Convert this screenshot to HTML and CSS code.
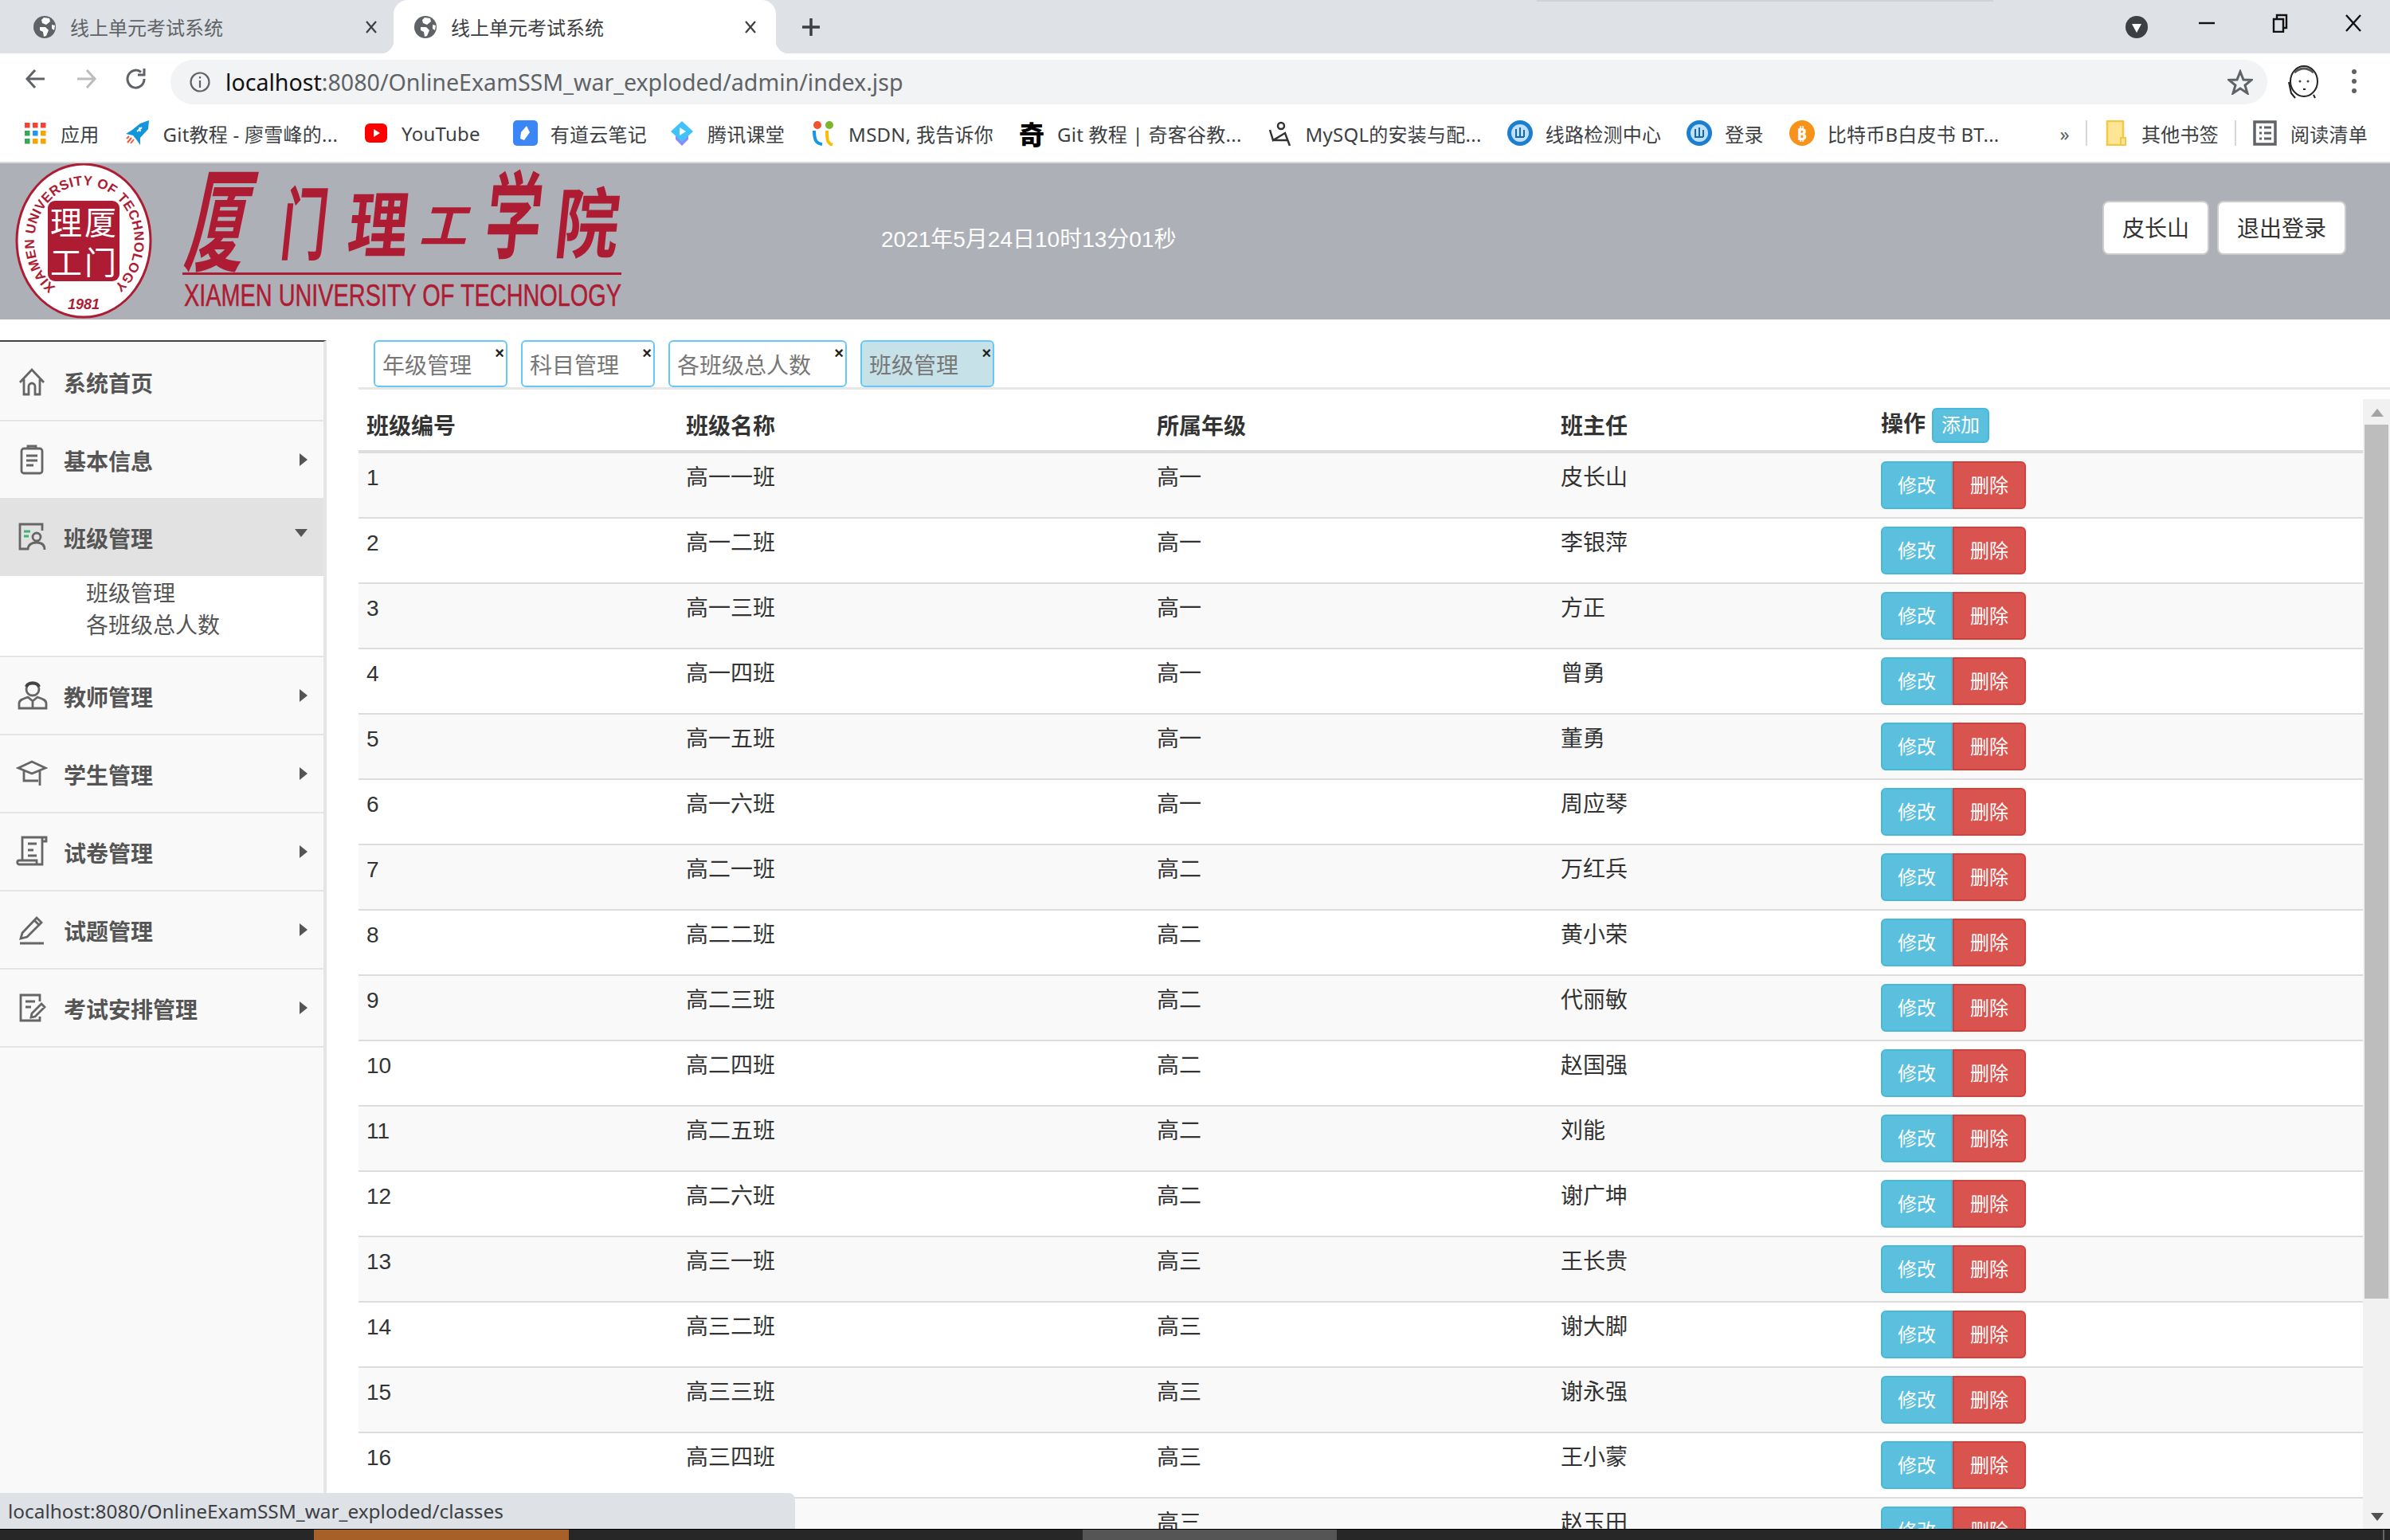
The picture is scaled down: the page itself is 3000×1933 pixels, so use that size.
FILE: index.html
```html
<!DOCTYPE html>
<html lang="zh-CN">
<head>
  <meta charset="UTF-8" />
  <title>线上单元考试系统</title>
  <link rel="stylesheet" href="styles.css">
</head>
<body>
  <svg class="defs" width="0" height="0">
    <symbol id="globe" viewBox="0 0 28 28">
      <circle cx="14" cy="14" r="14" fill="#5f6368"/>
      <path d="M13 2 L20 3 L21 7 L16 11 L11 9 L10 5 Z M8 14 L15 14 L19 18 L16 25 L13 26 L12 20 L8 18 Z M23 11 L27 12 L26 18 L23 16 Z" fill="#fff"/>
    </symbol>
  </svg>

  <div class="tabstrip">
    <div class="tab">
      <svg class="favicon"><use href="#globe"/></svg>
      <span class="tab-title">线上单元考试系统</span>
      <svg class="tab-close" viewBox="0 0 16 16"><path d="M2 1 L14 15 M14 1 L2 15"/></svg>
    </div>
    <div class="tab tab-on">
      <svg class="favicon"><use href="#globe"/></svg>
      <span class="tab-title">线上单元考试系统</span>
      <svg class="tab-close" viewBox="0 0 16 16"><path d="M2 1 L14 15 M14 1 L2 15"/></svg>
    </div>
    <svg class="tab-new" viewBox="0 0 24 24"><path d="M12 1 V23 M1 12 H23"/></svg>
    <div class="win-ctrls">
      <svg class="win-drop" viewBox="0 0 28 28"><circle cx="14" cy="14" r="14" fill="#3c4043"/><path d="M8 10 H20 L14 21 Z" fill="#fff"/></svg>
      <svg class="win-btn" viewBox="0 0 24 24"><path d="M2 12 H22"/></svg>
      <svg class="win-btn" viewBox="0 0 24 24"><path d="M4 7 H16 V23 H4 Z M8 7 V2 H20 V18 H16"/></svg>
      <svg class="win-btn" viewBox="0 0 24 24"><path d="M3 2 L21 22 M21 2 L3 22"/></svg>
    </div>
  </div>

  <div class="toolbar">
    <svg class="tool-icon" viewBox="0 0 28 28"><path d="M25 14 H4 M13 3 L3 14 L13 25"/></svg>
    <svg class="tool-icon tool-off" viewBox="0 0 28 28"><path d="M3 14 H24 M15 3 L25 14 L15 25"/></svg>
    <svg class="tool-icon" viewBox="0 0 28 28"><path d="M24 14 A10.5 11 0 1 1 20 5.5 M24 1 V9 H16"/></svg>
    <div class="omnibox">
      <svg class="info-icon" viewBox="0 0 26 26"><circle cx="13" cy="13" r="11.5"/><path d="M13 11 V20 M13 6 V8.5"/></svg>
      <span class="url"><b>localhost</b>:8080/OnlineExamSSM_war_exploded/admin/index.jsp</span>
      <svg class="star" viewBox="0 0 32 32"><path d="M16 3 L20 13 L30 13.5 L22 20 L25 30 L16 24 L7 30 L10 20 L2 13.5 L12 13 Z"/></svg>
    </div>
    <svg class="avatar" viewBox="0 0 44 44"><ellipse cx="24" cy="21" rx="17" ry="19" fill="#fff" stroke="#222" stroke-width="2"/><path d="M12 10 Q24 0 36 10" fill="none" stroke="#555" stroke-width="3"/><circle cx="19" cy="21" r="1.5" fill="#444"/><circle cx="29" cy="21" r="1.5" fill="#444"/><path d="M23 31 H26 M5 22 L8 36 L13 42 M36 38 L38 42" fill="none" stroke="#222" stroke-width="2"/></svg>
    <div class="menu-dots"><i></i><i></i><i></i></div>
  </div>

  <div class="bookmarks">
    <div class="bm">
      <svg class="bm-icon" viewBox="0 0 32 32">
        <rect x="3" y="3" width="6.5" height="6.5" fill="#f44336"/><rect x="13" y="3" width="6.5" height="6.5" fill="#f44336"/><rect x="23" y="3" width="6.5" height="6.5" fill="#f44336"/>
        <rect x="3" y="13" width="6.5" height="6.5" fill="#34a853"/><rect x="13" y="13" width="6.5" height="6.5" fill="#2196f3"/><rect x="23" y="13" width="6.5" height="6.5" fill="#f5a500"/>
        <rect x="3" y="23" width="6.5" height="6.5" fill="#34a853"/><rect x="13" y="23" width="6.5" height="6.5" fill="#f5a500"/><rect x="23" y="23" width="6.5" height="6.5" fill="#f5a500"/>
      </svg>
      <span>应用</span>
    </div>
    <div class="bm">
      <svg class="bm-icon" viewBox="0 0 32 32"><path d="M30 0 L29 11 L19 22 L19 31 L14 24 L10 19 L1 17 L9 12 L19 4 Z" fill="#1296db"/><path d="M15 14 L21 9 M18 9 L19 14" stroke="#fff" stroke-width="2"/><path d="M3 28 L8 22 M7 29 L11 24 M2 23 L5 20" stroke="#f0553a" stroke-width="2"/></svg>
      <span>Git教程 - 廖雪峰的...</span>
    </div>
    <div class="bm bm-wide">
      <svg class="bm-icon" viewBox="0 0 32 32"><rect x="2" y="4" width="28" height="24" rx="6" fill="#f00"/><path d="M13 11 L21 16 L13 21 Z" fill="#fff"/></svg>
      <span>YouTube</span>
    </div>
    <div class="bm bm-narrow">
      <svg class="bm-icon" viewBox="0 0 32 32"><rect x="1" y="0" width="31" height="32" rx="5" fill="#3a86f7"/><path d="M18 7 L22 15 L15 25 L10 23 L11 15 Z" fill="#fff"/></svg>
      <span>有道云笔记</span>
    </div>
    <div class="bm">
      <svg class="bm-icon" viewBox="0 0 32 32"><path d="M8 18 L16 26 L24 18 L24 24 L16 32 L8 24 Z" fill="#8b8cf5"/><path d="M16 1 L30 14 L16 27 L2 14 Z" fill="#3fc3fa"/><path d="M13 9 L21 14 L13 19 Z" fill="#fff"/></svg>
      <span>腾讯课堂</span>
    </div>
    <div class="bm">
      <svg class="bm-icon" viewBox="0 0 32 32"><circle cx="9" cy="6" r="5" fill="#f0532d"/><circle cx="24" cy="6" r="5" fill="#7cb62a"/><path d="M5 13 C5 26 8 29 15 30" fill="none" stroke="#1597e5" stroke-width="4"/><path d="M21 13 C21 26 22 29 28 31" fill="none" stroke="#fbbc05" stroke-width="4"/></svg>
      <span>MSDN, 我告诉你</span>
    </div>
    <div class="bm">
      <span class="bm-icon bm-qi">奇</span>
      <span>Git 教程 | 奇客谷教...</span>
    </div>
    <div class="bm">
      <svg class="bm-icon" viewBox="0 0 32 32"><circle cx="17" cy="7" r="4" fill="none" stroke="#333" stroke-width="2.5"/><path d="M3 12 L7 25 L22 16 L28 32 M7 25 L25 25" fill="none" stroke="#333" stroke-width="2.5"/></svg>
      <span>MySQL的安装与配...</span>
    </div>
    <div class="bm">
      <svg class="bm-icon" viewBox="0 0 32 32"><circle cx="16" cy="16" r="16" fill="#1a7fd1"/><circle cx="16" cy="16" r="11" fill="#bfe0f7"/><path d="M11 11 V21 H21 M16 9 V21 M21 12 V21" fill="none" stroke="#1466ad" stroke-width="2"/></svg>
      <span>线路检测中心</span>
    </div>
    <div class="bm">
      <svg class="bm-icon" viewBox="0 0 32 32"><circle cx="16" cy="16" r="16" fill="#1a7fd1"/><circle cx="16" cy="16" r="11" fill="#bfe0f7"/><path d="M11 11 V21 H21 M16 9 V21 M21 12 V21" fill="none" stroke="#1466ad" stroke-width="2"/></svg>
      <span>登录</span>
    </div>
    <div class="bm">
      <span class="bm-icon bm-btc">₿</span>
      <span>比特币B白皮书 BT...</span>
    </div>
    <span class="bm-more">»</span>
    <i class="bm-sep"></i>
    <div class="bm bm-tight">
      <svg class="bm-icon" viewBox="0 0 32 32"><path d="M5 1 H25 V31 H5 Z" fill="#ffe596" stroke="#f4c842" stroke-width="2.5"/><path d="M22 22 H28 V31 H22 Z" fill="#ffe596" stroke="#f4c842" stroke-width="2"/></svg>
      <span>其他书签</span>
    </div>
    <i class="bm-sep"></i>
    <div class="bm bm-tight">
      <svg class="bm-icon" viewBox="0 0 32 32"><rect x="3" y="2" width="26" height="28" fill="none" stroke="#5f6368" stroke-width="3.5"/><path d="M9 9 H12 M15 9 H24 M9 16 H12 M15 16 H24 M9 23 H12 M15 23 H24" stroke="#5f6368" stroke-width="3"/></svg>
      <span>阅读清单</span>
    </div>
  </div>

  <header class="site-header">
    <svg class="logo" viewBox="0 205 800 196" width="800" height="196">
      <g transform="translate(10 200)" fill="#ae1c34">
        <ellipse cx="95" cy="102" rx="84" ry="96" fill="#fff" stroke="#ae1c34" stroke-width="3"/>
        <path id="ring" d="M60 160 A63 70 0 1 1 132 160" fill="none"/>
        <text class="seal-ring"><textPath href="#ring" textLength="338">XIAMEN UNIVERSITY OF TECHNOLOGY</textPath></text>
        <text class="seal-year" x="95" y="188" text-anchor="middle">1981</text>
        <rect x="50" y="52" width="90" height="101" rx="9"/>
        <g class="seal-chars" fill="#fff">
          <text x="96" y="94">厦</text>
          <text x="96" y="144">门</text>
          <text x="53" y="94">理</text>
          <text x="53" y="144">工</text>
        </g>
      </g>
      <g class="logo-cn" fill="#ae1c34">
        <text transform="translate(230 329) skewX(-12) scale(.62 1.16)" font-size="120">厦</text>
        <text transform="translate(350 318) skewX(-6) scale(.72 1.25)" font-size="80">门</text>
        <text transform="translate(434 316) skewX(-6) scale(1 1.2)" font-size="76">理</text>
        <text transform="translate(526 305) skewX(-14)" font-size="60">工</text>
        <text transform="translate(606 315) skewX(-6) scale(.9 1.53)" font-size="78">学</text>
        <text transform="translate(694 316) skewX(-6) scale(1 1.2)" font-size="80">院</text>
      </g>
      <rect x="229" y="342" width="551" height="3" fill="#ae1c34"/>
      <text class="logo-en" x="231" y="384" textLength="549" lengthAdjust="spacingAndGlyphs" fill="#ae1c34">XIAMEN UNIVERSITY OF TECHNOLOGY</text>
    </svg>
    <div class="clock">2021年5月24日10时13分01秒</div>
    <div class="user-btns">
      <button class="user-btn">皮长山</button>
      <button class="user-btn">退出登录</button>
    </div>
  </header>

  <div class="main">
    <aside class="sidebar">
      <div class="nav-item">
        <svg class="nav-icon" viewBox="0 0 40 40"><path d="M5 21 L20 5 L35 21 M10 17 V36 H16 V26 A4 4 0 0 1 24 26 V36 H30 V17"/></svg>
        <span>系统首页</span>
      </div>
      <div class="nav-item nav-before-on">
        <svg class="nav-icon" viewBox="0 0 40 40"><rect x="7" y="6" width="26" height="31" rx="3"/><path d="M15 6 V3 H25 V6 M13 15 H27 M13 21 H27 M13 27 H22"/></svg>
        <span>基本信息</span>
        <i class="caret"></i>
      </div>
      <div class="nav-item nav-on">
        <svg class="nav-icon" viewBox="0 0 40 40"><path d="M16 35 H5 V4 H33 V12"/><path class="nav-green" d="M10 13 H18 M10 19 H16"/><circle cx="26" cy="20" r="5"/><path d="M15 36 C15 29 20 27 26 27 C32 27 36 29 36 36"/></svg>
        <span>班级管理</span>
        <i class="caret caret-down"></i>
      </div>
      <div class="nav-sub">
        <div>班级管理</div>
        <div>各班级总人数</div>
      </div>
      <div class="nav-item">
        <svg class="nav-icon" viewBox="0 0 40 40"><circle cx="21" cy="12" r="8"/><path class="nav-thick" d="M13 9 C15 3 27 3 29 9"/><path d="M4 36 V30 C4 25 10 24 15 22 L21 27 L27 22 C32 24 38 25 38 30 V36 Z M21 27 V35"/></svg>
        <span>教师管理</span>
        <i class="caret"></i>
      </div>
      <div class="nav-item">
        <svg class="nav-icon" viewBox="0 0 40 40"><path d="M3 13 L20 5 L37 13 L20 20 Z M10 17 V29 H28 M30 17 V35"/></svg>
        <span>学生管理</span>
        <i class="caret"></i>
      </div>
      <div class="nav-item">
        <svg class="nav-icon" viewBox="0 0 40 40"><path d="M33 2 H8 V31 M33 2 V36 H4 C1 36 1 31 4 31 H26 V36 M33 2 H38 V7 H33 M15 10 H26 M15 18 H22 M15 25 H26"/></svg>
        <span>试卷管理</span>
        <i class="caret"></i>
      </div>
      <div class="nav-item">
        <svg class="nav-icon" viewBox="0 0 40 40"><path d="M8 24 L26 5 L32 11 L14 29 L6 31 Z M23 8 L29 14 M5 37 H35"/></svg>
        <span>试题管理</span>
        <i class="caret"></i>
      </div>
      <div class="nav-item">
        <svg class="nav-icon" viewBox="0 0 40 40"><path d="M30 12 V4 H6 V36 H30 V31 M12 12 H24 M12 19 H19 M20 27 L32 15 L36 19 L24 31 L19 32 Z"/></svg>
        <span>考试安排管理</span>
        <i class="caret"></i>
      </div>
    </aside>

    <section class="content">
      <div class="page-tabs">
        <div class="page-tab">年级管理<span class="page-tab-x">×</span></div>
        <div class="page-tab">科目管理<span class="page-tab-x">×</span></div>
        <div class="page-tab">各班级总人数<span class="page-tab-x">×</span></div>
        <div class="page-tab page-tab-on">班级管理<span class="page-tab-x">×</span></div>
      </div>
      <div class="table-wrap">
        <div class="table-scroll">
          <table class="data">
            <colgroup><col class="c1"><col class="c2"><col class="c3"><col class="c4"><col class="c5"></colgroup>
            <thead>
              <tr><th>班级编号</th><th>班级名称</th><th>所属年级</th><th>班主任</th><th><div class="th-op"><span>操作</span><button class="btn-add">添加</button></div></th></tr>
            </thead>
            <tbody>
              <tr><td>1</td><td>高一一班</td><td>高一</td><td>皮长山</td><td><button class="btn-edit">修改</button><button class="btn-del">删除</button></td></tr>
              <tr><td>2</td><td>高一二班</td><td>高一</td><td>李银萍</td><td><button class="btn-edit">修改</button><button class="btn-del">删除</button></td></tr>
              <tr><td>3</td><td>高一三班</td><td>高一</td><td>方正</td><td><button class="btn-edit">修改</button><button class="btn-del">删除</button></td></tr>
              <tr><td>4</td><td>高一四班</td><td>高一</td><td>曾勇</td><td><button class="btn-edit">修改</button><button class="btn-del">删除</button></td></tr>
              <tr><td>5</td><td>高一五班</td><td>高一</td><td>董勇</td><td><button class="btn-edit">修改</button><button class="btn-del">删除</button></td></tr>
              <tr><td>6</td><td>高一六班</td><td>高一</td><td>周应琴</td><td><button class="btn-edit">修改</button><button class="btn-del">删除</button></td></tr>
              <tr><td>7</td><td>高二一班</td><td>高二</td><td>万红兵</td><td><button class="btn-edit">修改</button><button class="btn-del">删除</button></td></tr>
              <tr><td>8</td><td>高二二班</td><td>高二</td><td>黄小荣</td><td><button class="btn-edit">修改</button><button class="btn-del">删除</button></td></tr>
              <tr><td>9</td><td>高二三班</td><td>高二</td><td>代丽敏</td><td><button class="btn-edit">修改</button><button class="btn-del">删除</button></td></tr>
              <tr><td>10</td><td>高二四班</td><td>高二</td><td>赵国强</td><td><button class="btn-edit">修改</button><button class="btn-del">删除</button></td></tr>
              <tr><td>11</td><td>高二五班</td><td>高二</td><td>刘能</td><td><button class="btn-edit">修改</button><button class="btn-del">删除</button></td></tr>
              <tr><td>12</td><td>高二六班</td><td>高二</td><td>谢广坤</td><td><button class="btn-edit">修改</button><button class="btn-del">删除</button></td></tr>
              <tr><td>13</td><td>高三一班</td><td>高三</td><td>王长贵</td><td><button class="btn-edit">修改</button><button class="btn-del">删除</button></td></tr>
              <tr><td>14</td><td>高三二班</td><td>高三</td><td>谢大脚</td><td><button class="btn-edit">修改</button><button class="btn-del">删除</button></td></tr>
              <tr><td>15</td><td>高三三班</td><td>高三</td><td>谢永强</td><td><button class="btn-edit">修改</button><button class="btn-del">删除</button></td></tr>
              <tr><td>16</td><td>高三四班</td><td>高三</td><td>王小蒙</td><td><button class="btn-edit">修改</button><button class="btn-del">删除</button></td></tr>
              <tr><td>17</td><td>高三五班</td><td>高三</td><td>赵玉田</td><td><button class="btn-edit">修改</button><button class="btn-del">删除</button></td></tr>
            </tbody>
          </table>
        </div>
        <div class="scrollbar">
          <i class="sb-up"></i>
          <div class="sb-track"><div class="sb-thumb"></div></div>
          <i class="sb-down"></i>
        </div>
      </div>
    </section>
  </div>

  <div class="status-bubble">localhost:8080/OnlineExamSSM_war_exploded/classes</div>

  <div class="taskbar">
    <i class="tb-gap1"></i>
    <i class="tb-orange"></i>
    <i class="tb-gap2"></i>
    <i class="tb-grey"></i>
    <i class="tb-rest"></i>
  </div>
</body>
</html>
```

FILE: styles.css
```css
* { box-sizing: border-box; }
html, body { margin: 0; height: 100%; }
body { width: 3000px; height: 1933px; overflow: hidden; display: flex; flex-direction: column; position: relative; background: #fff; color: #333; font-family: "Liberation Sans", "Noto Sans CJK SC", sans-serif; font-size: 28px; }
.defs { position: absolute; }

/* browser chrome */
.tabstrip { height: 67px; flex: none; background: #dee1e6; display: flex; align-items: center; position: relative; }
.tabstrip::after { content: ""; position: absolute; top: 0; left: 1929px; width: 573px; height: 2px; background: #cfd2d6; }
.tab { width: 494px; height: 67px; display: flex; align-items: center; padding-left: 42px; color: #5f6368; font-family: "Noto Sans", "Noto Sans CJK SC", sans-serif; font-size: 24px; position: relative; }
.tab-on { width: 480px; padding-left: 26px; background: #fff; border-radius: 18px 18px 0 0; color: #3c4043; }
.tab-on::before, .tab-on::after { content: ""; position: absolute; bottom: 0; width: 16px; height: 16px; }
.tab-on::before { left: -16px; background: radial-gradient(circle at 0 0, transparent 16px, #fff 16.5px); }
.tab-on::after { right: -16px; background: radial-gradient(circle at 100% 0, transparent 16px, #fff 16.5px); }
.favicon { width: 28px; height: 28px; flex: none; margin-right: 18px; }
.tab-title { width: 192px; white-space: nowrap; }
.tab-close { width: 16px; height: 16px; margin-left: 178px; fill: none; stroke: #3c4043; stroke-width: 2.2; }
.tab-on .tab-close { margin-left: 176px; }
.tab-new { width: 24px; height: 24px; margin-left: 32px; fill: none; stroke: #3c4043; stroke-width: 3.5; }
.win-ctrls { margin-left: auto; display: flex; align-items: center; }
.win-drop { width: 28px; height: 28px; margin-right: 62px; }
.win-btn { width: 24px; height: 24px; margin-right: 68px; margin-top: -10px; fill: none; stroke: #111; stroke-width: 2.4; }
.win-btn:last-child { margin-right: 34px; }

.toolbar { height: 64px; flex: none; background: #fff; display: flex; align-items: center; padding-left: 31px; }
.tool-icon { width: 28px; height: 28px; margin-right: 35px; fill: none; stroke: #5f6368; stroke-width: 3; }
.tool-icon:nth-child(3) { margin-right: 29px; }
.tool-off { stroke: #babcbe; }
.omnibox { width: 2632px; height: 56px; margin-top: 8px; border-radius: 28px; background: #f1f3f4; display: flex; align-items: center; padding: 0 18px 0 24px; flex: none; }
.info-icon { width: 26px; height: 26px; flex: none; fill: none; stroke: #5f6368; stroke-width: 2.2; }
.url { margin-left: 19px; margin-bottom: 2px; font-family: "Noto Sans", sans-serif; font-size: 28.6px; color: #5f6368; white-space: nowrap; }
.url b { font-weight: 400; color: #111; }
.star { width: 32px; height: 32px; margin-left: auto; fill: none; stroke: #5f6368; stroke-width: 3; }
.avatar { width: 44px; height: 44px; margin-left: 22px; margin-top: 8px; flex: none; }
.menu-dots { margin-left: 40px; margin-top: 6px; display: flex; flex-direction: column; gap: 6px; }
.menu-dots i { width: 6px; height: 6px; border-radius: 50%; background: #5f6368; display: block; }

.bookmarks { height: 74px; flex: none; background: #fff; border-bottom: 2px solid #d9d9d9; display: flex; align-items: center; padding: 0 28px; font-family: "Noto Sans", "Noto Sans CJK SC", sans-serif; font-size: 24px; letter-spacing: .25px; color: #3c4043; white-space: nowrap; }
.bm { display: flex; align-items: center; gap: 16px; margin-right: 32px; }
.bm-wide { margin-right: 40px; }
.bm-narrow { margin-right: 28px; }
.bm-tight { margin-right: 0; }
.bm-icon { width: 32px; height: 32px; flex: none; display: block; }
.bm-qi { font-family: "Noto Sans CJK SC", sans-serif; font-size: 32px; font-weight: 900; color: #000; line-height: 32px; text-align: center; }
.bm-btc { border-radius: 50%; background: #f7931a; color: #fff; font-size: 22px; font-weight: 700; line-height: 32px; text-align: center; }
.bm-more { margin-left: auto; font-size: 24px; color: #5f6368; }
.bm-sep { width: 2px; height: 32px; background: #d5d7da; margin: 0 20px; }

.site-header { height: 196px; flex: none; background: #aeb0b7; display: flex; align-items: flex-start; }
.logo { display: block; flex: none; }
.seal-ring { font-family: "Liberation Sans", sans-serif; font-size: 17px; font-weight: 700; }
.seal-year { font-family: "Liberation Sans", sans-serif; font-size: 18px; font-weight: 700; font-style: italic; }
.seal-chars { font-family: "Noto Sans CJK SC", sans-serif; font-size: 40px; }
.logo-cn { font-family: "Noto Sans CJK SC", sans-serif; font-weight: 700; }
.logo-en { font-family: "Liberation Sans", sans-serif; font-size: 38px; stroke: #ae1c34; stroke-width: .5; }
.clock { margin: 78px 0 0 306px; line-height: 36px; color: #fff; white-space: nowrap; }
.user-btns { margin: 47px 55px 0 auto; display: flex; gap: 10px; }
.user-btn { height: 68px; padding: 0 23px 2px; background: #fff; border: 2px solid #ccc; border-radius: 8px; color: #333; font: inherit; }

/* page body */
.main { flex: 1; min-height: 0; display: flex; overflow: hidden; }
.sidebar { width: 410px; flex: none; margin-top: 26px; background: #f9f9f9; border-top: 2px solid #444; border-right: 4px solid #e5e5e5; }
.nav-item { height: 98px; padding: 2px 20px 0; display: flex; align-items: center; gap: 20px; border-bottom: 2px solid #e5e5e5; color: #555; font-weight: 700; }
.nav-item:first-child { height: 100px; padding-top: 4px; }
.nav-before-on { height: 96px; border-bottom: none; }
.nav-on { background: #e2e2e2; border-bottom: none; }
.nav-icon { width: 40px; height: 40px; flex: none; margin-top: -2px; fill: none; stroke: #666; stroke-width: 2.8; }
.nav-green { stroke: #3cb371; stroke-width: 3; }
.nav-thick { stroke-width: 4; stroke: #444; }
.caret { margin-left: auto; width: 0; height: 0; border-left: 10px solid #555; border-top: 8px solid transparent; border-bottom: 8px solid transparent; margin-top: -2px; }
.caret-down { border-left: 8px solid transparent; border-right: 8px solid transparent; border-top: 10px solid #555; border-bottom: none; margin-top: -12px; }
.nav-sub { height: 102px; padding: 3px 0 0 108px; background: #fff; border-bottom: 2px solid #e5e5e5; color: #555; line-height: 40px; }

.content { flex: 1; min-width: 0; margin-left: 40px; display: flex; flex-direction: column; padding-top: 26px; }
.page-tabs { flex: none; height: 62px; padding-left: 19px; display: flex; gap: 17px; border-bottom: 3px solid #e7e7e7; }
.page-tab { height: 59px; padding: 12px 43px 0 9px; border: 2px solid #66c8f8; border-radius: 6px; color: #777; line-height: 38px; position: relative; }
.page-tab-on { background: #c6e2e8; }
.page-tab-x { position: absolute; top: 4px; right: 2px; font-size: 20px; font-weight: 700; line-height: 20px; color: #222; }
.table-wrap { flex: 1; min-height: 0; display: flex; }
.table-scroll { width: 2516px; flex: none; overflow: hidden; }
.data { width: 2516px; table-layout: fixed; border-collapse: separate; border-spacing: 0; }
.c1 { width: 401px; }
.c2 { width: 591px; }
.c3 { width: 507px; }
.c4 { width: 402px; }
.data th { box-sizing: content-box; height: 67px; padding: 0 10px 9px; border-bottom: 4px solid #ddd; text-align: left; vertical-align: bottom; line-height: 41px; color: #333; }
.data td { box-sizing: content-box; height: 60px; padding: 10px; border-bottom: 2px solid #ddd; line-height: 42px; vertical-align: top; }
.data tbody tr:nth-child(odd) td { background: #f9f9f9; }
.th-op { display: flex; align-items: flex-start; gap: 8px; }
button { font-family: inherit; }
.btn-add { height: 44px; padding: 0 10px; font-size: 24px; line-height: 40px; color: #fff; background: #5bc0de; border: 2px solid #46b8da; border-radius: 6px; }
.btn-edit, .btn-del { width: 90px; height: 60px; padding: 0 0 3px; font-size: 24px; color: #fff; border: 2px solid; vertical-align: top; }
.btn-edit { background: #5bc0de; border-color: #46b8da; border-radius: 6px 0 0 6px; }
.btn-del { width: 92px; background: #d9534f; border-color: #d43f3a; border-radius: 0 6px 6px 0; }
.scrollbar { margin-top: 12px; width: 34px; flex: none; background: #f1f1f1; display: flex; flex-direction: column; align-items: center; padding-left: 2px; }
.sb-up { margin: 12px 0 10px; width: 0; height: 0; border-left: 8px solid transparent; border-right: 8px solid transparent; border-bottom: 10px solid #a3a3a3; }
.sb-track { flex: 1; width: 100%; min-height: 0; padding-right: 2px; }
.sb-thumb { height: 1097px; background: #bdbdbd; }
.sb-down { margin: 0 0 10px; width: 0; height: 0; border-left: 8px solid transparent; border-right: 8px solid transparent; border-top: 10px solid #505050; }

/* hover url bubble, sits over the page */
.status-bubble { position: absolute; left: 0; top: 1874px; width: 998px; height: 45px; padding-left: 10px; background: #dee1e6; border-radius: 0 8px 0 0; font-family: "Noto Sans", sans-serif; font-size: 24.4px; line-height: 45px; color: #3c4043; white-space: nowrap; }

.taskbar { height: 14px; flex: none; display: flex; background: #272727; border-top: 1px solid #000; }
.taskbar i { display: block; height: 100%; }
.tb-gap1 { width: 394px; }
.tb-orange { width: 320px; background: #a66028; }
.tb-gap2 { width: 645px; }
.tb-grey { width: 319px; background: #555; }
.tb-rest { width: 1315px; border-right: 2px solid #666; }
```
